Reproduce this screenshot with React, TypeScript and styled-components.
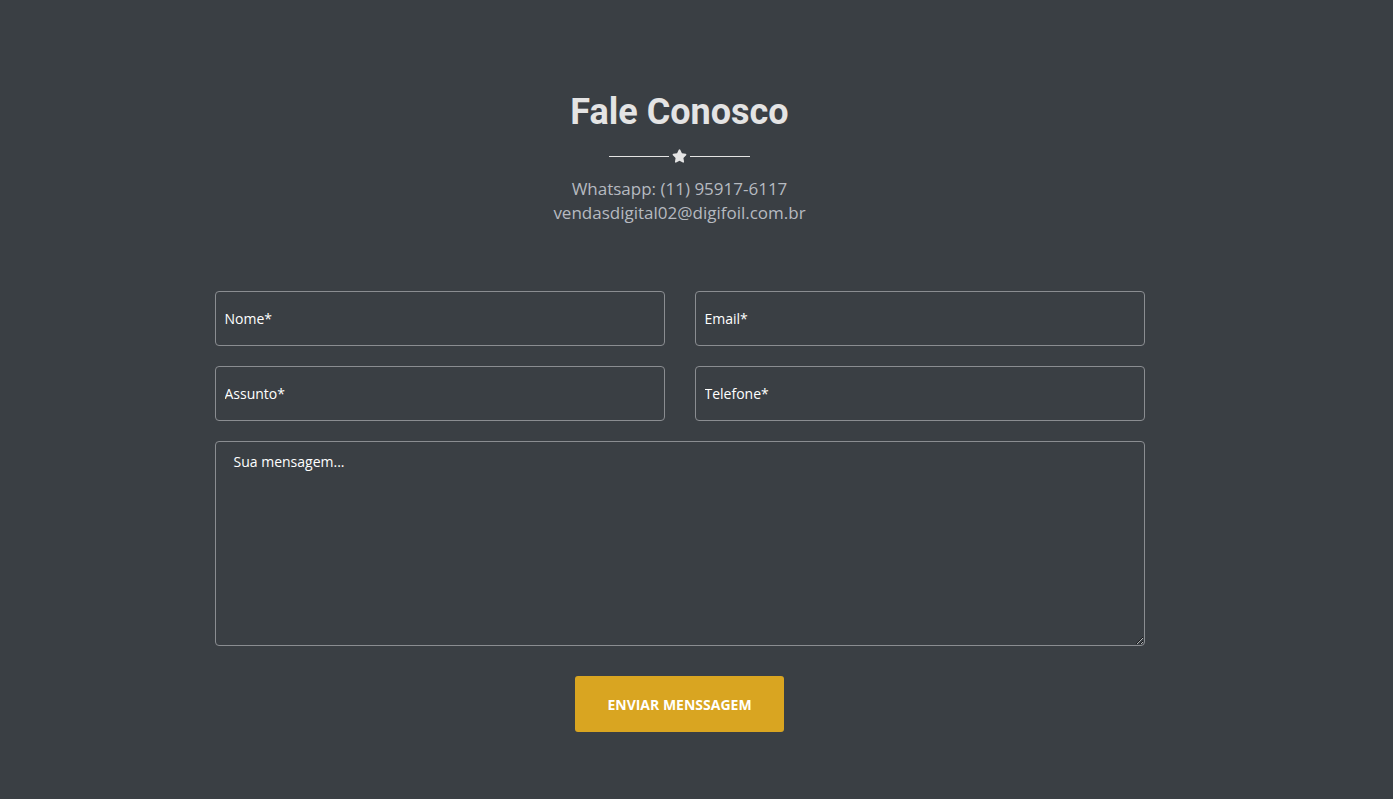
import React from "react";
import styled, { createGlobalStyle } from "styled-components";

const Global = createGlobalStyle`
  html, body { margin: 0; padding: 0; background: #3a3f44; }
  * { box-sizing: border-box; }
`;

const Page = styled.section`
  min-height: 799px;
  background: #3a3f44;
  display: flex;
  flex-direction: column;
  align-items: center;
  padding-top: 90px;
  padding-right: 34px;
  font-family: "Open Sans", sans-serif;
`;

const Title = styled.h2`
  margin: 0;
  font-family: Roboto, sans-serif;
  font-weight: 700;
  font-size: 36px;
  line-height: 44px;
  color: #e4e4e4;
`;

const Divider = styled.div`
  display: flex;
  align-items: center;
  gap: 3px;
  margin-top: 15px;
  height: 14px;
`;

const Line = styled.span`
  display: block;
  width: 60px;
  height: 1px;
  background: #e4e4e4;
`;

const Info = styled.p`
  margin: 14px 0 0;
  text-align: center;
  font-size: 17px;
  line-height: 24px;
  color: #b6bac0;
`;

const Form = styled.form`
  margin-top: 66px;
  width: 930px;
  display: grid;
  grid-template-columns: 1fr 1fr;
  column-gap: 30px;
  row-gap: 20px;
`;

const Field = styled.input`
  height: 55px;
  width: 100%;
  background: transparent;
  border: 1px solid #8a8d91;
  border-radius: 4px;
  padding: 0 9px;
  font-family: "Open Sans", sans-serif;
  font-size: 14px;
  color: #fff;
  outline: none;
  &::placeholder { color: #fff; opacity: 1; }
`;

const Message = styled.textarea`
  grid-column: 1 / -1;
  height: 205px;
  width: 100%;
  background: transparent;
  border: 1px solid #8a8d91;
  border-radius: 4px;
  padding: 10px 18px;
  font-family: "Open Sans", sans-serif;
  font-size: 14px;
  line-height: 20px;
  color: #fff;
  outline: none;
  &::placeholder { color: #fff; opacity: 1; }
`;

const Actions = styled.div`
  grid-column: 1 / -1;
  display: flex;
  justify-content: center;
  margin-top: 10px;
`;

const Button = styled.button`
  width: 209px;
  height: 56px;
  border: none;
  border-radius: 3px;
  background: #d9a521;
  color: #fff;
  font-family: "Open Sans", sans-serif;
  font-weight: 700;
  font-size: 14px;
  text-transform: uppercase;
  cursor: pointer;
`;

const Star = () => (
  <svg width="15" height="14" viewBox="0 0 576 512" aria-hidden>
    <path
      fill="#e4e4e4"
      d="M316.9 18C311.6 7 300.4 0 288.1 0s-23.4 7-28.8 18L195 150.3 51.4 171.5c-12 1.8-22 10.2-25.7 21.7s-.7 24.2 7.9 32.7L137.8 329 113.2 474.7c-2 12 3 24.2 12.9 31.3s23 8 33.8 2.3l128.3-68.5 128.3 68.5c10.8 5.7 23.9 4.9 33.8-2.3s14.9-19.3 12.9-31.3L438.5 329 542.7 225.9c8.6-8.5 11.7-21.2 7.9-32.7s-13.7-19.9-25.7-21.7L381.2 150.3 316.9 18z"
    />
  </svg>
);

export default function App() {
  return (
    <>
      <Global />
      <Page>
        <Title>Fale Conosco</Title>
        <Divider>
          <Line />
          <Star />
          <Line />
        </Divider>
        <Info>
          Whatsapp: (11) 95917-6117
          <br />
          vendasdigital02@digifoil.com.br
        </Info>
        <Form onSubmit={(e) => e.preventDefault()}>
          <Field placeholder="Nome*" />
          <Field placeholder="Email*" />
          <Field placeholder="Assunto*" />
          <Field placeholder="Telefone*" />
          <Message placeholder="Sua mensagem..." />
          <Actions>
            <Button type="submit">Enviar Menssagem</Button>
          </Actions>
        </Form>
      </Page>
    </>
  );
}
